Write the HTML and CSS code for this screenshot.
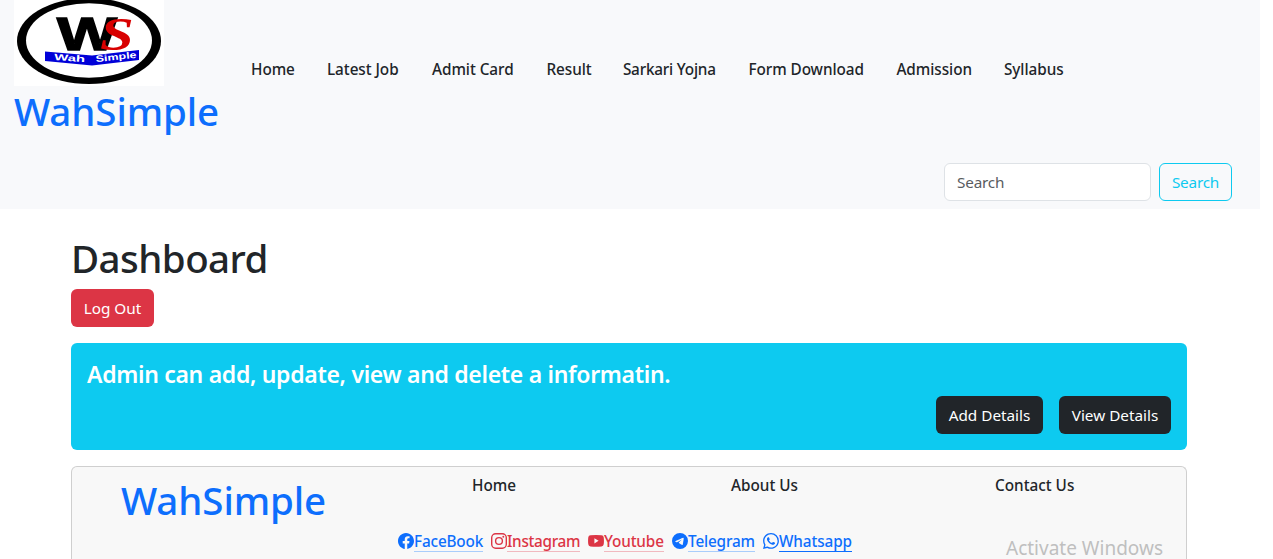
FILE: index.html
```html
<!DOCTYPE html>
<html lang="en">
<head>
<meta charset="utf-8">
<title>WahSimple Dashboard</title>
<link rel="stylesheet" href="styles.css">
</head>
<body>
<div class="page">
<header class="header">
  <div class="header-row">
    <a class="brand">
      <svg class="logo" width="150" height="86" viewBox="0 0 150 86">
        <rect width="150" height="86" fill="#fff"/>
        <ellipse cx="75" cy="41" rx="72" ry="43" fill="#000"/>
        <ellipse cx="75" cy="40.5" rx="63" ry="37.3" fill="#fff"/>
        <text class="logo-w" transform="translate(43 50) scale(1.38 1)">W</text>
        <text class="logo-s" transform="translate(86 49.5) scale(1.32 1)">S</text>
        <path d="M31 51.5 L78 55.5 L125 50 V60 L78 65.5 L31 61Z" fill="#0000d8"/>
        <text class="logo-name" transform="translate(40 60) rotate(4)" textLength="31" lengthAdjust="spacingAndGlyphs">Wah</text>
        <text class="logo-name" transform="translate(82 62) rotate(-6)" textLength="41" lengthAdjust="spacingAndGlyphs">Simple</text>
      </svg>
      <span class="title">WahSimple</span>
    </a>
    <nav class="nav">
      <a class="w44">Home</a><a class="w73">Latest Job</a><a class="w83">Admit Card</a><a class="w45">Result</a><a class="w94">Sarkari Yojna</a><a class="w116">Form Download</a><a class="w76">Admission</a><a class="w59">Syllabus</a>
    </nav>
  </div>
  <form class="search">
    <input class="field" type="text" placeholder="Search">
    <button class="btn btn-outline" type="button">Search</button>
  </form>
</header>
<main class="container">
  <h1 class="title heading">Dashboard</h1>
  <button class="btn btn-danger" type="button">Log Out</button>
  <section class="panel">
    <h2 class="panel-title">Admin can add, update, view and delete a informatin.</h2>
    <div class="actions">
      <button class="btn btn-dark add" type="button">Add Details</button>
      <button class="btn btn-dark view" type="button">View Details</button>
    </div>
  </section>
  <footer class="footer">
    <div class="footer-row">
      <span class="title footer-brand">WahSimple</span>
      <a class="col home">Home</a>
      <a class="col about">About Us</a>
      <a class="col contact">Contact Us</a>
    </div>
    <div class="social">
      <a class="blue"><svg class="icon" viewBox="0 0 16 16"><path d="M16 8.049c0-4.446-3.582-8.05-8-8.05C3.58 0-.002 3.603-.002 8.05c0 4.017 2.926 7.347 6.75 7.951v-5.625h-2.03V8.05H6.75V6.275c0-2.017 1.195-3.131 3.022-3.131.876 0 1.791.157 1.791.157v1.98h-1.009c-.993 0-1.303.621-1.303 1.258v1.51h2.218l-.354 2.326H9.25V16c3.824-.604 6.75-3.934 6.75-7.951"/></svg><span class="w69">FaceBook</span></a>
      <a class="red"><svg class="icon line" viewBox="0 0 16 16"><rect x=".7" y=".7" width="14.6" height="14.6" rx="4"/><circle cx="8" cy="8" r="3.4"/><circle class="dot" cx="12.3" cy="3.7" r=".95"/></svg><span class="w73">Instagram</span></a>
      <a class="red"><svg class="icon" viewBox="0 0 16 16"><path fill-rule="evenodd" d="M2.5 2.2Q8 1.8 13.5 2.2Q15.5 2.4 15.7 4.3Q16.2 8 15.7 11.2Q15.5 13.2 13.5 13.4Q8 13.9 2.5 13.4Q.5 13.2 .3 11.2Q-.2 8 .3 4.3Q.5 2.4 2.5 2.2M6.4 5.2V10.4L10.6 7.8Z"/></svg><span class="w60">Youtube</span></a>
      <a class="blue"><svg class="icon" viewBox="0 0 16 16"><path d="M16 8A8 8 0 1 1 0 8a8 8 0 0 1 16 0M8.287 5.906q-1.168.486-4.666 2.01-.567.225-.595.442c-.03.243.275.339.69.47l.175.055c.408.133.958.288 1.243.294q.39.01.868-.32 3.269-2.206 3.374-2.23c.05-.012.12-.026.166.016s.042.12.037.141c-.03.129-1.227 1.241-1.846 1.817-.193.18-.33.307-.358.336a8 8 0 0 1-.188.186c-.38.366-.664.64.015 1.088.327.216.589.393.85.571.284.194.568.387.936.629q.14.092.27.187c.331.236.63.448.997.414.214-.02.435-.22.547-.82.265-1.417.786-4.486.906-5.751a1.4 1.4 0 0 0-.013-.315.34.34 0 0 0-.114-.217.53.53 0 0 0-.31-.093c-.3.005-.763.166-2.984 1.09"/></svg><span class="w67">Telegram</span></a>
      <a class="blue active"><svg class="icon" viewBox="0 0 16 16"><path d="M13.601 2.326A7.85 7.85 0 0 0 7.994 0C3.627 0 .068 3.558.064 7.926c0 1.399.366 2.76 1.057 3.965L0 16l4.204-1.102a7.9 7.9 0 0 0 3.79.965h.004c4.368 0 7.926-3.558 7.93-7.93A7.9 7.9 0 0 0 13.6 2.326zM7.994 14.521a6.6 6.6 0 0 1-3.356-.92l-.24-.144-2.494.654.666-2.433-.156-.251a6.56 6.56 0 0 1-1.007-3.505c0-3.626 2.957-6.584 6.591-6.584a6.56 6.56 0 0 1 4.66 1.931 6.56 6.56 0 0 1 1.928 4.66c-.004 3.639-2.961 6.592-6.592 6.592m3.615-4.934c-.197-.099-1.17-.578-1.353-.646-.182-.065-.315-.099-.445.099-.133.197-.513.646-.627.775-.114.133-.232.148-.43.05-.197-.1-.836-.308-1.592-.985-.59-.525-.985-1.175-1.103-1.372-.114-.198-.011-.304.088-.403.087-.088.197-.232.296-.346.1-.114.133-.198.198-.33.065-.134.034-.248-.015-.347-.05-.099-.445-1.076-.612-1.47-.16-.389-.323-.335-.445-.34-.114-.007-.247-.007-.38-.007a.73.73 0 0 0-.529.247c-.182.198-.691.677-.691 1.654s.71 1.916.81 2.049c.098.133 1.394 2.132 3.383 2.992.47.205.84.326 1.129.418.475.152.904.129 1.246.08.38-.058 1.171-.48 1.338-.943.164-.464.164-.86.114-.943-.049-.084-.182-.133-.38-.232"/></svg><span class="w73">Whatsapp</span></a>
    </div>
  </footer>
</main>
</div>
<div class="watermark">Activate Windows</div>
</body>
</html>
```
FILE: styles.css
```css
* { box-sizing: border-box; }
body { margin: 0; height: 559px; overflow: hidden; background: #fff; color: #212529; font: 15.3px/24px "Noto Sans", sans-serif; position: relative; }
.page { width: 1260px; }
.header { height: 209px; background: #f8f9fb; }
.header-row { display: flex; height: 163px; }
.brand { width: 251px; padding-left: 14px; display: flex; flex-direction: column; }
.logo { display: block; }
.logo-w { font: bold 46px "Liberation Sans", sans-serif; stroke: #000; stroke-width: 1.5px; }
.logo-s { font: italic bold 46px "Liberation Serif", serif; fill: #d80000; }
.logo-name { font: bold 9px "Liberation Sans", sans-serif; fill: #fff; }
.title { font-size: 38.5px; line-height: 48px; font-weight: 500; letter-spacing: -0.1px; white-space: nowrap; }
.brand .title, .footer-brand { color: #0d6efd; }
.brand .title { margin-top: 1px; }
.nav { display: flex; gap: 32px; padding-top: 57px; font-weight: 500; letter-spacing: -0.05px; }
.nav a, .social span { white-space: nowrap; }
.w44 { width: 44px; } .w45 { width: 44.4px; } .w59 { width: 59px; } .w60 { width: 60px; }
.w67 { width: 67px; } .w69 { width: 69px; } .w73 { width: 73px; } .w76 { width: 75.6px; }
.w83 { width: 82.5px; } .w94 { width: 93.5px; letter-spacing: -0.2px; } .w116 { width: 116px; }
.search { display: flex; gap: 8px; justify-content: flex-end; padding-right: 28px; }
.field { width: 207px; height: 38px; border: 1px solid #dee2e6; border-radius: 6px; padding: 0 12px; font: inherit; letter-spacing: -0.2px; background: #fff; }
.field::placeholder { color: #595c5f; opacity: 1; }
.btn { height: 38px; border: 1px solid transparent; border-radius: 6px; padding: 0; font: inherit; color: #fff; white-space: nowrap; display: block; }
.btn-outline { width: 73px; letter-spacing: -0.2px; border-color: #0dcaf0; color: #0dcaf0; background: transparent; }
.btn-danger { width: 83px; background: #dc3545; }
.btn-dark { background: #212529; }
.add { width: 107px; }
.view { width: 112px; }
.container { width: 1116px; margin: 0 0 0 71px; padding-top: 25px; }
.heading { margin: 0 0 7px; letter-spacing: -0.55px; }
.panel { height: 107px; margin: 16px 0; padding: 17px 16px 16px; background: #0dcaf0; border-radius: 6px; }
.panel-title { margin: 0 0 7px; font-size: 23px; line-height: 29px; font-weight: 600; letter-spacing: -0.31px; color: #fff; white-space: nowrap; }
.actions { display: flex; gap: 16px; justify-content: flex-end; }
.footer { height: 93px; border: 1px solid #cfcfcf; border-bottom: 0; border-radius: 6px 6px 0 0; background: #f8f8f8; }
.footer-row { height: 62px; padding: 6px 0 0 49px; display: grid; grid-template-columns: 351px 259px 264px 1fr; font-weight: 500; }
.footer-brand { line-height: 55px; }
.social { display: flex; gap: 8px; padding-left: 326px; font-weight: 500; letter-spacing: -0.15px; }
.social a { display: flex; height: 24px; align-items: center; }
.social span { line-height: 20px; height: 21px; border-bottom: 1px solid #a9cdfb; }
.icon { width: 16px; height: 16px; fill: currentColor; margin-bottom: 1px; }
.line { fill: none; stroke: currentColor; stroke-width: 1.4; }
.dot { fill: currentColor; stroke: none; }
.blue { color: #0d6efd; }
.red { color: #dc3545; }
.social .w73 { letter-spacing: -0.3px; }
.social .active .w73 { letter-spacing: -0.1px; }
.social .red span { border-color: #f1b9bf; }
.social .active span { border-color: #0d6efd; }
.watermark { position: absolute; left: 1006px; top: 534px; font-size: 19px; line-height: 28px; color: #bfbfbf; white-space: nowrap; }
```
